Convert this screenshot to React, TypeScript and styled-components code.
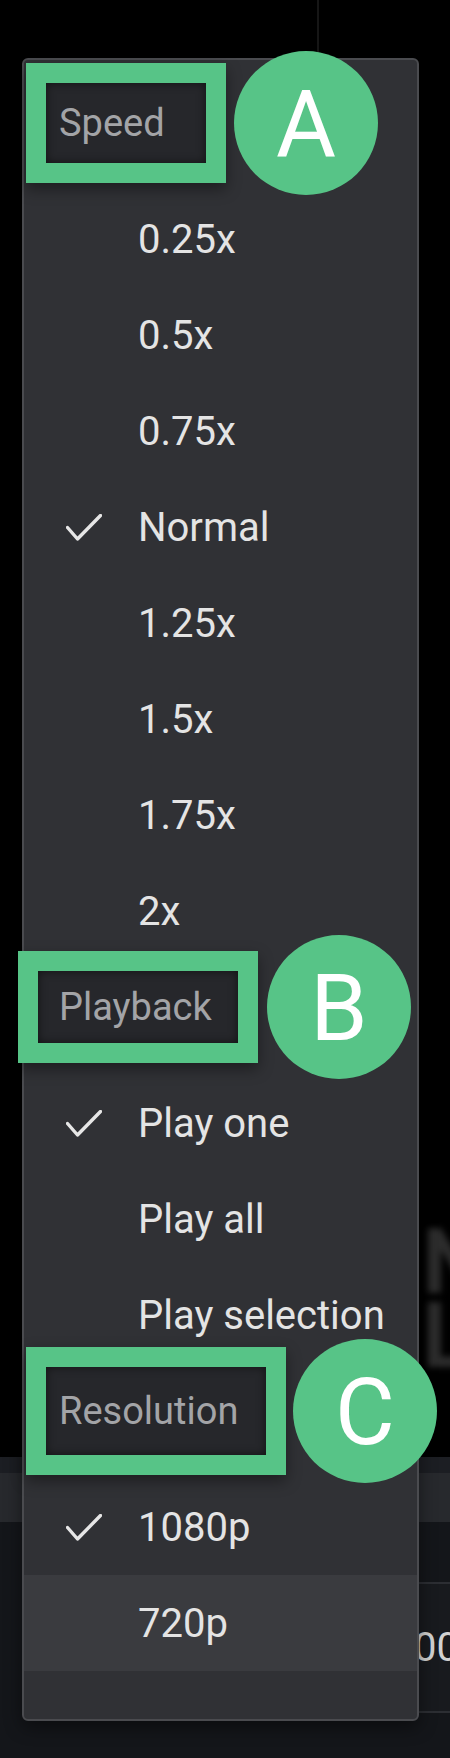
import React from "react";
import styled, { createGlobalStyle } from "styled-components";

const GlobalStyle = createGlobalStyle`
  html, body { margin: 0; padding: 0; background: #000; }
  #root { width: 450px; }
  * { box-sizing: border-box; }
`;

const Page = styled.div`
  position: relative;
  width: 450px;
  height: 1758px;
  display: flex;
  flex-direction: column;
  background: #000;
  overflow: hidden;
  font-family: Roboto, "Liberation Sans", Arial, sans-serif;
`;

const VideoFrame = styled.div`
  position: relative;
  flex: 0 0 1457px;
  background: #000;
`;

const FrameLine = styled.div`
  position: absolute;
  left: 317px;
  top: 0;
  width: 2px;
  height: 300px;
  background: #161616;
`;

const FrameText = styled.div`
  position: absolute;
  left: 422px;
  top: 1226px;
  font-size: 90px;
  line-height: 74px;
  font-weight: 700;
  color: #2c2c2c;
  filter: blur(3px);
`;

const ControlBar = styled.div`
  flex: 0 0 65px;
  display: flex;
  flex-direction: column;
`;

const ControlStrip = styled.div<{ $h: number; $bg: string }>`
  height: ${(p) => p.$h}px;
  background: ${(p) => p.$bg};
`;

const Lower = styled.div`
  flex: 1;
  background: #14161a;
  padding-top: 60px;
  display: flex;
  justify-content: flex-end;
  align-items: flex-start;
`;

const TimeBox = styled.div`
  width: 180px;
  height: 131px;
  border: 2px solid #2c2e33;
  border-right: none;
  background: #181a1e;
  display: flex;
  align-items: center;
  justify-content: flex-end;
  font-size: 40px;
  color: #d2d2d2;
`;

const TimeText = styled.span`
  margin-right: -9px;
`;

const Menu = styled.div`
  position: absolute;
  left: 22px;
  top: 58px;
  width: 397px;
  border: 2px solid #4a4b4f;
  border-radius: 6px;
  background: #303135;
  padding: 15px 0 48px;
  display: flex;
  flex-direction: column;
  box-shadow: 0 6px 18px rgba(0, 0, 0, 0.45);
`;

const HeaderRow = styled.div`
  height: 96px;
  margin-bottom: 20px;
  display: flex;
  align-items: center;
`;

const LabelFrame = styled.div<{ $x: number; $w: number; $h: number; $pl: number }>`
  position: relative;
  z-index: 1;
  flex: 0 0 auto;
  margin-left: ${(p) => p.$x}px;
  width: ${(p) => p.$w + 40}px;
  height: ${(p) => p.$h + 40}px;
  border: 20px solid #57c487;
  background: #26272b;
  padding-left: ${(p) => p.$pl}px;
  display: flex;
  align-items: center;
  font-size: 38px;
  color: #a3a4a7;
  white-space: nowrap;
  box-shadow: inset 0 0 10px rgba(0, 0, 0, 0.55), 0 6px 14px rgba(0, 0, 0, 0.4);
`;

const Badge = styled.div<{ $gap: number }>`
  position: relative;
  z-index: 1;
  flex: 0 0 144px;
  width: 144px;
  height: 144px;
  margin-left: ${(p) => p.$gap}px;
  border-radius: 50%;
  background: #57c487;
  color: #fff;
  font-size: 92px;
  line-height: 1;
  display: flex;
  align-items: center;
  justify-content: center;
  padding-top: 4px;
`;

const Item = styled.div<{ $hover?: boolean }>`
  height: 96px;
  display: grid;
  grid-template-columns: 114px 1fr;
  align-items: center;
  background: ${(p) => (p.$hover ? "#3a3b3f" : "transparent")};
  font-size: 40px;
  color: #e4e4e4;
  white-space: nowrap;
`;

const CheckSlot = styled.div`
  padding-left: 42px;
  display: flex;
  align-items: center;
  height: 100%;
  padding-top: 2px;
`;

const Check = () => (
  <svg width="36" height="28" viewBox="0 0 36 28" fill="none">
    <polyline
      points="1.5,13.5 11.5,25 34.5,1.5"
      stroke="#e6e6e6"
      strokeWidth="3.4"
      strokeLinecap="round"
      strokeLinejoin="round"
    />
  </svg>
);

type Opt = { label: string; checked?: boolean; hover?: boolean };
type Section = {
  title: string;
  letter: string;
  frame: { x: number; w: number; h: number; pl: number; gap: number };
  options: Opt[];
};

const sections: Section[] = [
  {
    title: "Speed",
    letter: "A",
    frame: { x: 2, w: 160, h: 80, pl: 13, gap: 8 },
    options: [
      { label: "0.25x" },
      { label: "0.5x" },
      { label: "0.75x" },
      { label: "Normal", checked: true },
      { label: "1.25x" },
      { label: "1.5x" },
      { label: "1.75x" },
      { label: "2x" },
    ],
  },
  {
    title: "Playback",
    letter: "B",
    frame: { x: -6, w: 200, h: 72, pl: 21, gap: 9 },
    options: [
      { label: "Play one", checked: true },
      { label: "Play all" },
      { label: "Play selection" },
    ],
  },
  {
    title: "Resolution",
    letter: "C",
    frame: { x: 2, w: 220, h: 88, pl: 13, gap: 7 },
    options: [{ label: "1080p", checked: true }, { label: "720p", hover: true }],
  },
];

export default function App() {
  return (
    <>
      <GlobalStyle />
      <Page>
        <VideoFrame>
          <FrameLine />
          <FrameText>
            N
            <br />L
          </FrameText>
        </VideoFrame>
        <ControlBar>
          <ControlStrip $h={16} $bg="#1c1e23" />
          <ControlStrip $h={49} $bg="#27292d" />
        </ControlBar>
        <Lower>
          <TimeBox>
            <TimeText>1:00</TimeText>
          </TimeBox>
        </Lower>

        <Menu>
          {sections.map((s) => (
            <React.Fragment key={s.title}>
              <HeaderRow>
                <LabelFrame $x={s.frame.x} $w={s.frame.w} $h={s.frame.h} $pl={s.frame.pl}>
                  {s.title}
                </LabelFrame>
                <Badge $gap={s.frame.gap}>{s.letter}</Badge>
              </HeaderRow>
              {s.options.map((o) => (
                <Item key={o.label} $hover={o.hover}>
                  <CheckSlot>{o.checked && <Check />}</CheckSlot>
                  <span>{o.label}</span>
                </Item>
              ))}
            </React.Fragment>
          ))}
        </Menu>
      </Page>
    </>
  );
}
